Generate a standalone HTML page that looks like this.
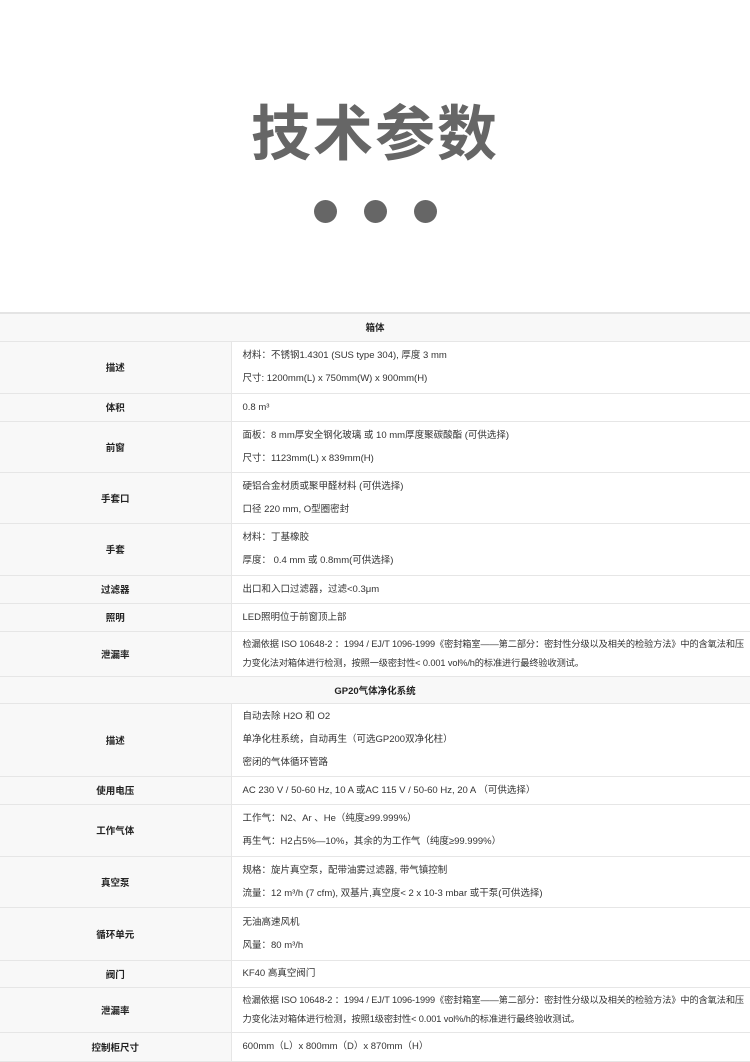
<!DOCTYPE html>
<html><head><meta charset="utf-8"><style>
body{margin:0;background:#fff;width:750px;height:1062px;overflow:hidden;font-family:"Liberation Sans","Noto Sans CJK SC",sans-serif;color:#333}
h1{position:absolute;top:92px;left:0;width:750px;text-align:center;margin:0;font-size:60px;line-height:76px;color:#666;font-weight:bold;letter-spacing:2px;font-family:"Noto Sans CJK SC",sans-serif}
.dot{position:absolute;top:200px;width:23px;height:23px;border-radius:50%;background:#666}
table{position:absolute;top:312px;left:0;width:750px;border-collapse:collapse;table-layout:fixed;font-size:9.5px;border-top:2px solid #e4e4e4}
td{border-bottom:1px solid #e6e6e6;padding:0;vertical-align:middle}
td.l{background:#f8f8f8;text-align:center;font-weight:bold;color:#222;border-right:1px solid #e6e6e6}
td.r{padding-left:11px;line-height:23px;color:#333}
td.h{background:#f8f8f8;text-align:center;font-weight:bold;color:#222}
td.n{line-height:19px;padding-right:0;font-size:9.2px;letter-spacing:-0.1px}
</style></head><body>
<h1>技术参数</h1>
<div class="dot" style="left:314px"></div><div class="dot" style="left:364px"></div><div class="dot" style="left:414px"></div>
<table>
<colgroup><col style="width:231px"><col style="width:519px"></colgroup>
<tr style="height:28px"><td class="h" colspan="2">箱体</td></tr>
<tr style="height:52px"><td class="l">描述</td><td class="r">材料：不锈钢1.4301 (SUS type 304), 厚度 3 mm<br>尺寸: 1200mm(L) x 750mm(W) x 900mm(H)</td></tr>
<tr style="height:28px"><td class="l">体积</td><td class="r">0.8 m³</td></tr>
<tr style="height:51px"><td class="l">前窗</td><td class="r">面板：8 mm厚安全钢化玻璃 或 10 mm厚度聚碳酸酯 (可供选择)<br>尺寸：1123mm(L) x 839mm(H)</td></tr>
<tr style="height:51px"><td class="l">手套口</td><td class="r">硬铝合金材质或聚甲醛材料 (可供选择)<br>口径 220 mm, O型圈密封</td></tr>
<tr style="height:52px"><td class="l">手套</td><td class="r">材料：丁基橡胶<br>厚度： 0.4 mm 或 0.8mm(可供选择)</td></tr>
<tr style="height:28px"><td class="l">过滤器</td><td class="r">出口和入口过滤器，过滤&lt;0.3μm</td></tr>
<tr style="height:28px"><td class="l">照明</td><td class="r">LED照明位于前窗顶上部</td></tr>
<tr style="height:45px"><td class="l">泄漏率</td><td class="r n">检漏依据 ISO 10648-2 ：1994 / EJ/T 1096-1999《密封箱室——第二部分：密封性分级以及相关的检验方法》中的含氧法和压力变化法对箱体进行检测，按照一级密封性&lt; 0.001 vol%/h的标准进行最终验收测试。</td></tr>
<tr style="height:27px"><td class="h" colspan="2">GP20气体净化系统</td></tr>
<tr style="height:73px"><td class="l">描述</td><td class="r">自动去除 H2O 和 O2<br>单净化柱系统，自动再生（可选GP200双净化柱）<br>密闭的气体循环管路</td></tr>
<tr style="height:28px"><td class="l">使用电压</td><td class="r">AC 230 V / 50-60 Hz, 10 A 或AC 115 V / 50-60 Hz, 20 A （可供选择）</td></tr>
<tr style="height:52px"><td class="l">工作气体</td><td class="r">工作气：N2、Ar 、He（纯度≥99.999%）<br>再生气：H2占5%—10%，其余的为工作气（纯度≥99.999%）</td></tr>
<tr style="height:51px"><td class="l">真空泵</td><td class="r">规格：旋片真空泵，配带油雾过滤器, 带气镇控制<br>流量：12 m³/h (7 cfm), 双基片,真空度&lt; 2 x 10-3 mbar 或干泵(可供选择)</td></tr>
<tr style="height:53px"><td class="l">循环单元</td><td class="r">无油高速风机<br>风量：80 m³/h</td></tr>
<tr style="height:27px"><td class="l">阀门</td><td class="r">KF40 高真空阀门</td></tr>
<tr style="height:45px"><td class="l">泄漏率</td><td class="r n">检漏依据 ISO 10648-2 ：1994 / EJ/T 1096-1999《密封箱室——第二部分：密封性分级以及相关的检验方法》中的含氧法和压力变化法对箱体进行检测，按照1级密封性&lt; 0.001 vol%/h的标准进行最终验收测试。</td></tr>
<tr style="height:29px"><td class="l">控制柜尺寸</td><td class="r">600mm（L）x 800mm（D）x 870mm（H）</td></tr>
</table>
</body></html>
